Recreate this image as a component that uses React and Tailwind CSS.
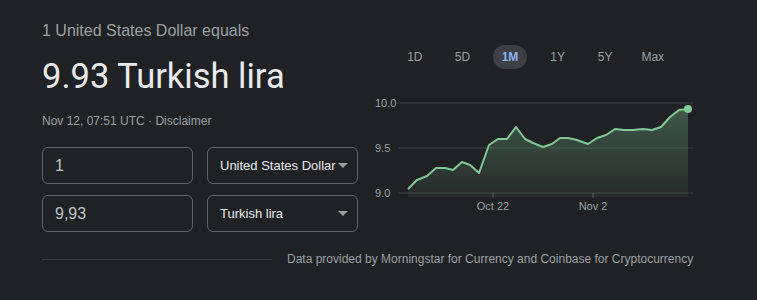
import { useState } from 'react';

const points = [
  [408, 189], [417, 180], [427, 176], [436, 168], [445, 168], [453, 170],
  [462, 162], [470, 165], [479, 173], [489, 145], [498, 139], [507, 139],
  [516, 127], [525, 139], [533, 143], [543, 147], [552, 144], [560, 138],
  [568, 138], [577, 140], [588, 144], [597, 138], [606, 135], [615, 129],
  [624, 130], [633, 130], [643, 129], [652, 130], [661, 127], [670, 117],
  [679, 110], [688, 109],
];

const ranges = ['1D', '5D', '1M', '1Y', '5Y', 'Max'];

const Chart = () => {
  const line = points.map(([x, y], i) => `${i ? 'L' : 'M'}${x} ${y}`).join(' ');
  const area = `${line} L688 197 L408 197 Z`;
  const grid = [
    { y: 103, label: '10.0' },
    { y: 148, label: '9.5' },
    { y: 193, label: '9.0' },
  ];

  return (
    <svg width="340" height="125" viewBox="360 90 340 125" className="block">
      <defs>
        <linearGradient id="fill" x1="0" y1="0" x2="0" y2="1">
          <stop offset="0%" stopColor="#81c995" stopOpacity="0.32" />
          <stop offset="100%" stopColor="#81c995" stopOpacity="0.06" />
        </linearGradient>
      </defs>
      {grid.map((g) => (
        <g key={g.label}>
          <line x1="398" x2="693" y1={g.y} y2={g.y} stroke="#35373a" strokeWidth="1.5" />
          <text x="375" y={g.y + 4} fill="#9aa0a6" fontSize="11" fontFamily="Liberation Sans, Arial, sans-serif">
            {g.label}
          </text>
        </g>
      ))}
      <path d={area} fill="url(#fill)" />
      <path d={line} fill="none" stroke="#81c995" strokeWidth="2" strokeLinejoin="round" />
      <circle cx="688" cy="109" r="4" fill="#81c995" />
      <line x1="493" x2="493" y1="193" y2="198" stroke="#5f6368" />
      <line x1="593" x2="593" y1="193" y2="198" stroke="#5f6368" />
      <text x="493" y="210" textAnchor="middle" fill="#9aa0a6" fontSize="11" fontFamily="Liberation Sans, Arial, sans-serif">
        Oct 22
      </text>
      <text x="593" y="210" textAnchor="middle" fill="#9aa0a6" fontSize="11" fontFamily="Liberation Sans, Arial, sans-serif">
        Nov 2
      </text>
    </svg>
  );
};

const Caret = () => (
  <svg width="10" height="5" viewBox="0 0 10 5" className="shrink-0">
    <path d="M0 0 L10 0 L5 5 Z" fill="#9aa0a6" />
  </svg>
);

const App = () => {
  const [range, setRange] = useState('1M');

  return (
    <div className="w-[757px] h-[300px] bg-[#202124] font-['Liberation_Sans',Arial,sans-serif] overflow-hidden">
      <div className="flex">
        <div className="pl-[42px] pt-[21px] w-[360px] shrink-0">
          <div className="text-[16px] leading-5 text-[#9aa0a6]">1 United States Dollar equals</div>
          <div className="mt-[13px] text-[34.5px] leading-[44px] text-[#e8eaed] font-['Roboto',Arial,sans-serif]">
            9.93 Turkish lira
          </div>
          <div className="mt-[15px] text-[12px] leading-4 text-[#9aa0a6]">
            Nov 12, 07:51 UTC · <span>Disclaimer</span>
          </div>
          <div className="mt-[18px] flex flex-col gap-[11px]">
            <div className="flex gap-[14px]">
              <div className="w-[151px] h-[37px] border border-[#5f6368] rounded-[6px] flex items-center pl-[12px] text-[16px] text-[#bdc1c6]">
                1
              </div>
              <div className="w-[151px] h-[37px] border border-[#5f6368] rounded-[6px] flex items-center justify-between pl-[12px] pr-[9px] text-[13px] text-[#e8eaed]">
                <span>United States Dollar</span>
                <Caret />
              </div>
            </div>
            <div className="flex gap-[14px]">
              <div className="w-[151px] h-[37px] border border-[#5f6368] rounded-[6px] flex items-center pl-[12px] text-[16px] text-[#bdc1c6]">
                9,93
              </div>
              <div className="w-[151px] h-[37px] border border-[#5f6368] rounded-[6px] flex items-center justify-between pl-[12px] pr-[9px] text-[13px] text-[#e8eaed]">
                <span>Turkish lira</span>
                <Caret />
              </div>
            </div>
          </div>
        </div>
        <div className="pt-[45px]">
          <div className="flex ml-[31px]">
            {ranges.map((r) => (
              <div key={r} className="w-[47.6px] flex justify-center">
                <button
                  onClick={() => setRange(r)}
                  className={`w-[34px] h-6 rounded-full text-[12px] ${
                    r === range ? 'bg-[#3c4043] text-[#8ab4f8] font-bold' : 'text-[#9aa0a6]'
                  }`}
                >
                  {r}
                </button>
              </div>
            ))}
          </div>
          <div className="mt-[21px]">
            <Chart />
          </div>
        </div>
      </div>
      <div className="flex items-center mt-[18px] pl-[42px]">
        <div className="w-[230px] h-px bg-[#3c4043]" />
        <div className="ml-[15px] text-[12px] text-[#9aa0a6]">
          Data provided by Morningstar for Currency and Coinbase for Cryptocurrency
        </div>
      </div>
    </div>
  );
};

export default App;
